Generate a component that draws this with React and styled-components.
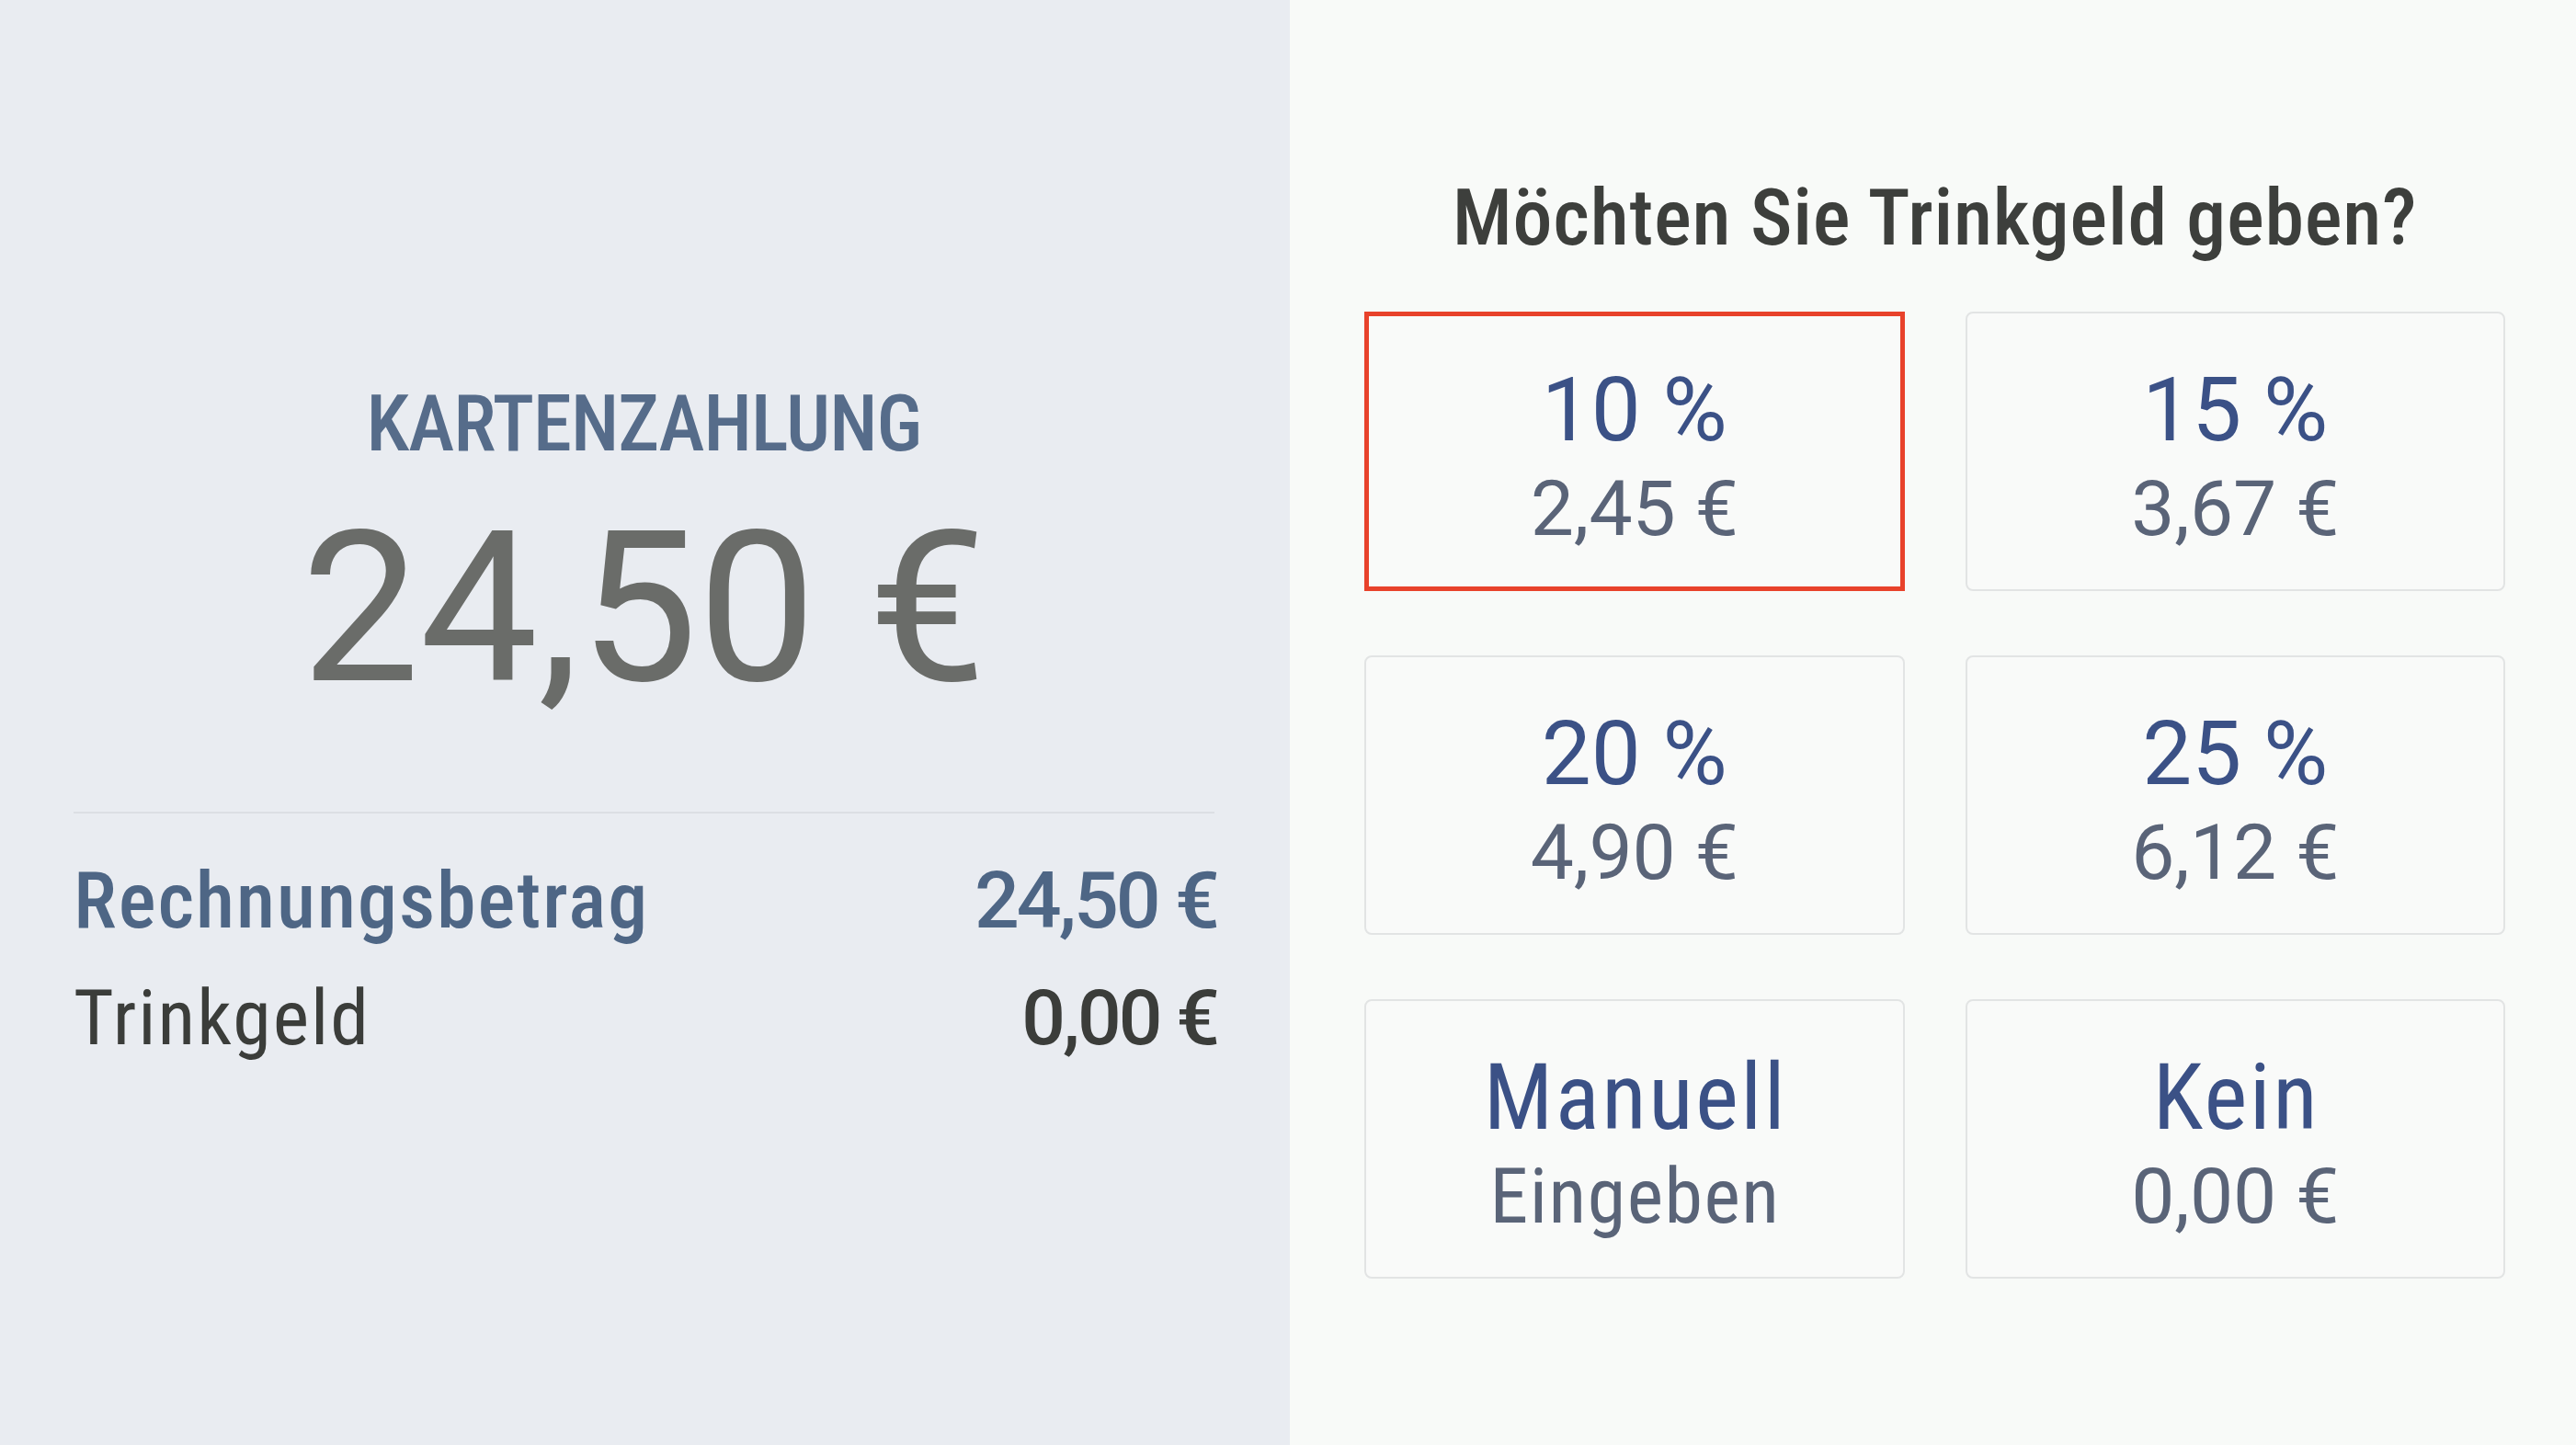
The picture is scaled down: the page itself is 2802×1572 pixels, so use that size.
import React from "react";
import styled, { createGlobalStyle } from "styled-components";

const GlobalStyle = createGlobalStyle`
  html, body {
    margin: 0;
    padding: 0;
  }
  body {
    font-family: "Roboto", "Open Sans", sans-serif;
    font-stretch: 75%;
  }
`;

const tips = [
  { label: "10 %", value: "2,45 €", selected: true },
  { label: "15 %", value: "3,67 €" },
  { label: "20 %", value: "4,90 €" },
  { label: "25 %", value: "6,12 €" },
  { label: "Manuell", value: "Eingeben", wordLabel: true, wordValue: true },
  { label: "Kein", value: "0,00 €", wordLabel: true },
];

export default function App() {
  return (
    <>
      <GlobalStyle />
      <Screen>
        <SummaryPanel>
          <Title>KARTENZAHLUNG</Title>
          <Total>24,50 €</Total>
          <Divider />
          <Line $tone="blue" $weight={500}>
            <span>Rechnungsbetrag</span>
            <Amount>24,50 €</Amount>
          </Line>
          <Line $tone="dark">
            <span>Trinkgeld</span>
            <Amount $weight={500}>0,00 €</Amount>
          </Line>
        </SummaryPanel>

        <TipPanel>
          <Question>Möchten Sie Trinkgeld geben?</Question>
          <TipGrid>
            {tips.map((tip) => (
              <TipCard key={tip.label} $selected={tip.selected}>
                <TipLabel $word={tip.wordLabel}>{tip.label}</TipLabel>
                <TipValue $word={tip.wordValue}>{tip.value}</TipValue>
              </TipCard>
            ))}
          </TipGrid>
        </TipPanel>
      </Screen>
    </>
  );
}

const Screen = styled.div`
  display: grid;
  grid-template-columns: 1403px 1fr;
  width: 100vw;
  height: 100vh;
  overflow: hidden;
`;

const SummaryPanel = styled.section`
  background-color: #e9ecf1;
  display: flex;
  flex-direction: column;
  justify-content: center;
  padding: 11px 82px 0 80px;
`;

const Title = styled.h2`
  margin: 0;
  text-align: center;
  font-size: 85px;
  line-height: 100px;
  font-weight: 500;
  letter-spacing: -1px;
  color: #566c8a;
`;

const Total = styled.div`
  margin-top: 31px;
  text-align: center;
  font-size: 229px;
  line-height: 240px;
  font-weight: 400;
  font-stretch: 100%;
  color: #6a6c69;
`;

const Divider = styled.hr`
  margin: 101px 0 31px;
  border: 0;
  border-top: 2px solid #dcdfe4;
`;

const Line = styled.div`
  display: flex;
  justify-content: space-between;
  align-items: baseline;
  font-size: ${(p) => (p.$tone === "blue" ? "86px" : "84px")};
  line-height: 128px;
  letter-spacing: 2px;
  font-weight: ${(p) => p.$weight || 400};
  color: ${(p) => (p.$tone === "blue" ? "#4e6685" : "#3b3d3a")};
`;

const Amount = styled.span`
  font-stretch: 100%;
  letter-spacing: -3px;
  margin-right: -3px;
  ${(p) => p.$weight && `font-weight: ${p.$weight};`}
`;

const TipPanel = styled.section`
  background-color: #f8faf8;
  display: flex;
  flex-direction: column;
  justify-content: center;
  padding: 6px 77px 0 81px;
`;

const Question = styled.h1`
  margin: 0 0 52px;
  text-align: center;
  font-size: 86px;
  line-height: 100px;
  font-weight: 500;
  letter-spacing: 0.75px;
  color: #3d3f3c;
`;

const TipGrid = styled.div`
  display: grid;
  grid-template-columns: 1fr 1fr;
  grid-auto-rows: 304px;
  column-gap: 66px;
  row-gap: 70px;
`;

const TipCard = styled.button`
  box-sizing: border-box;
  display: flex;
  flex-direction: column;
  align-items: center;
  justify-content: flex-start;
  margin: 0;
  padding: ${(p) => (p.$selected ? "47px" : "50px")} 0 0;
  background-color: #f9faf9;
  border: ${(p) => (p.$selected ? "5px solid #e8422b" : "2px solid #e2e4e4")};
  border-radius: ${(p) => (p.$selected ? "0" : "8px")};
  font-family: inherit;
  font-stretch: inherit;
  cursor: pointer;
`;

const TipLabel = styled.span`
  font-size: ${(p) => (p.$word ? "100px" : "96px")};
  line-height: 110px;
  font-weight: 400;
  font-stretch: ${(p) => (p.$word ? "75%" : "100%")};
  letter-spacing: ${(p) => (p.$word ? "2.5px" : "0")};
  text-indent: ${(p) => (p.$word ? "2.5px" : "0")};
  color: #3b5186;
`;

const TipValue = styled.span`
  font-size: 84px;
  line-height: 106px;
  font-weight: 400;
  font-stretch: ${(p) => (p.$word ? "75%" : "100%")};
  letter-spacing: ${(p) => (p.$word ? "1.5px" : "0")};
  text-indent: ${(p) => (p.$word ? "1.5px" : "0")};
  color: #5a6478;
`;
